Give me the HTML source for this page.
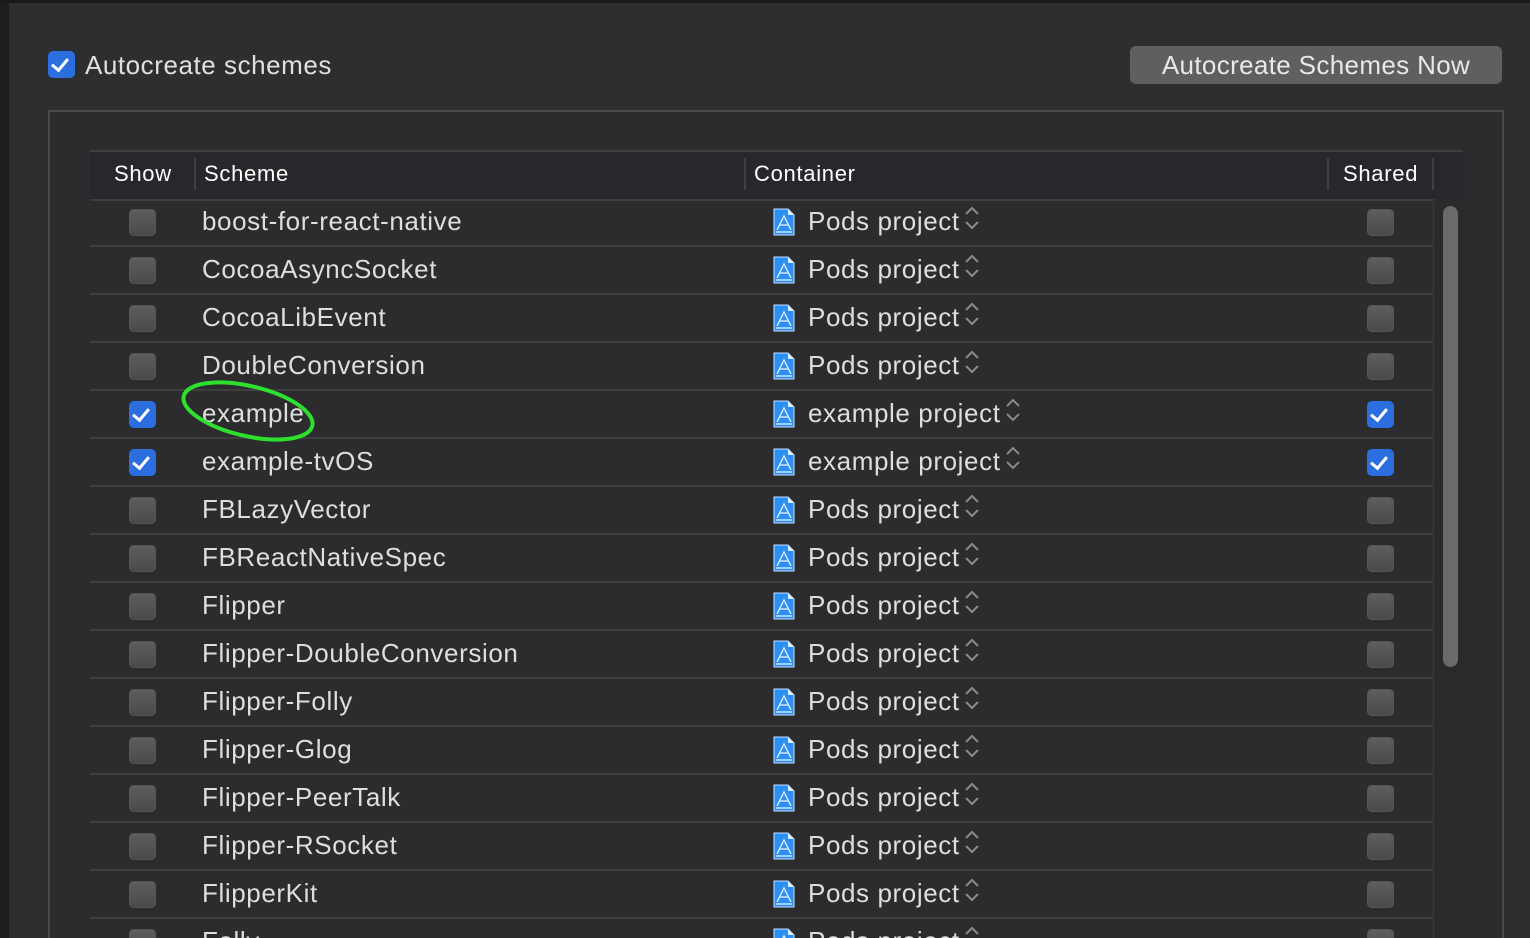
<!DOCTYPE html>
<html style="overflow:hidden"><head><meta charset="utf-8"><style>
html,body{margin:0;width:1530px;height:938px;overflow:hidden}
body{background:#2e2e30;font-family:"Liberation Sans",sans-serif;position:relative;color:#dcdcdc}
.a{position:absolute}
.cb{position:absolute;width:27px;height:27px;border-radius:5px;background:linear-gradient(#5e5e60,#4a4a4c);box-shadow:inset 0 0 0 1px #555}
.on{background:#2a6ee0;box-shadow:none}
.on::after{content:"";position:absolute;left:7px;top:4px;width:7px;height:13px;border:solid #fff;border-width:0 3px 3px 0;transform:rotate(40deg)}
.row{position:absolute;left:90px;width:1343px;height:46px;border-bottom:2px solid #3e3e41}
.row .n{position:absolute;left:112px;top:7px;font-size:26px;color:#dedede;letter-spacing:0.6px}
.row .c{position:absolute;left:718px;top:6px;font-size:26px;color:#dedede;letter-spacing:0.6px;white-space:nowrap}
.row .c svg{vertical-align:-1px;margin-left:4px}
.row .i{position:absolute;left:683px;top:9px;width:22px;height:28px}
.row .cb{top:10px}
.h{position:absolute;top:161px;font-size:22px;color:#fff;letter-spacing:0.7px}
.d{position:absolute;top:158px;width:2px;height:32px;background:#3e4044}
#clip{position:absolute;left:0;top:0;width:1530px;height:938px;overflow:hidden}
</style></head><body><div id="clip">
<div class="a" style="left:0;top:0;width:9px;height:938px;background:#1e1e20"></div>
<div class="a" style="left:0;top:0;width:1530px;height:3px;background:#1a1a1a"></div>
<div class="cb on" style="left:48px;top:51px"></div>
<div class="a" style="left:85px;top:50px;font-size:26px;color:#e0e0e0;letter-spacing:0.55px">Autocreate schemes</div>
<div class="a" style="left:1130px;top:46px;width:372px;height:38px;border-radius:6px;background:#5f5f61;color:#e8e8e8;font-size:26px;text-align:center;line-height:38px;letter-spacing:0.35px">Autocreate Schemes Now</div>
<div class="a" style="left:48px;top:110px;width:1452px;height:840px;border:2px solid #4a4a4c;background:#2c2c2e"></div>
<div class="a" style="left:90px;top:150px;width:1373px;height:47px;background:#26282b;border-top:2px solid #3e3e41;border-bottom:2px solid #3e3e41"></div>
<div class="h" style="left:114px">Show</div><div class="d" style="left:194px"></div>
<div class="h" style="left:204px">Scheme</div><div class="d" style="left:744px"></div>
<div class="h" style="left:754px">Container</div><div class="d" style="left:1327px"></div>
<div class="h" style="left:1343px">Shared</div><div class="d" style="left:1432px"></div>
<div class="a" style="left:1433px;top:199px;width:30px;height:739px;background:#2a2a2c;border-left:1px solid #3a3a3c"></div>
<div class="a" style="left:1443px;top:206px;width:15px;height:461px;border-radius:8px;background:#6a6a6c"></div>
<svg width="0" height="0" style="position:absolute"><defs><symbol id="ic" viewBox="0 0 22 28"><path d="M1 1h14l6 6v20H1z" fill="#2f8ff0" stroke="#bfe0ff" stroke-width="1"/><path d="M15 1v6h6" fill="#d8ecff"/><path d="M4 22L11 8l7 14M6 17h10M3 24h16" stroke="#e6f3ff" stroke-width="1.3" fill="none"/></symbol>
<symbol id="st" viewBox="0 0 16 26"><path d="M2 9l6-6 6 6M2 17l6 6 6-6" stroke="#8a8a8c" stroke-width="2" fill="none"/></symbol></defs></svg>
<div class="row" style="top:199px"><div class="cb" style="left:39px"></div><div class="n">boost-for-react-native</div><svg class="i"><use href="#ic"/></svg><div class="c">Pods project<svg width="16" height="26"><use href="#st"/></svg></div><div class="cb" style="left:1277px"></div></div>
<div class="row" style="top:247px"><div class="cb" style="left:39px"></div><div class="n">CocoaAsyncSocket</div><svg class="i"><use href="#ic"/></svg><div class="c">Pods project<svg width="16" height="26"><use href="#st"/></svg></div><div class="cb" style="left:1277px"></div></div>
<div class="row" style="top:295px"><div class="cb" style="left:39px"></div><div class="n">CocoaLibEvent</div><svg class="i"><use href="#ic"/></svg><div class="c">Pods project<svg width="16" height="26"><use href="#st"/></svg></div><div class="cb" style="left:1277px"></div></div>
<div class="row" style="top:343px"><div class="cb" style="left:39px"></div><div class="n">DoubleConversion</div><svg class="i"><use href="#ic"/></svg><div class="c">Pods project<svg width="16" height="26"><use href="#st"/></svg></div><div class="cb" style="left:1277px"></div></div>
<div class="row" style="top:391px"><div class="cb on" style="left:39px"></div><div class="n">example</div><svg class="i"><use href="#ic"/></svg><div class="c">example project<svg width="16" height="26"><use href="#st"/></svg></div><div class="cb on" style="left:1277px"></div></div>
<div class="row" style="top:439px"><div class="cb on" style="left:39px"></div><div class="n">example-tvOS</div><svg class="i"><use href="#ic"/></svg><div class="c">example project<svg width="16" height="26"><use href="#st"/></svg></div><div class="cb on" style="left:1277px"></div></div>
<div class="row" style="top:487px"><div class="cb" style="left:39px"></div><div class="n">FBLazyVector</div><svg class="i"><use href="#ic"/></svg><div class="c">Pods project<svg width="16" height="26"><use href="#st"/></svg></div><div class="cb" style="left:1277px"></div></div>
<div class="row" style="top:535px"><div class="cb" style="left:39px"></div><div class="n">FBReactNativeSpec</div><svg class="i"><use href="#ic"/></svg><div class="c">Pods project<svg width="16" height="26"><use href="#st"/></svg></div><div class="cb" style="left:1277px"></div></div>
<div class="row" style="top:583px"><div class="cb" style="left:39px"></div><div class="n">Flipper</div><svg class="i"><use href="#ic"/></svg><div class="c">Pods project<svg width="16" height="26"><use href="#st"/></svg></div><div class="cb" style="left:1277px"></div></div>
<div class="row" style="top:631px"><div class="cb" style="left:39px"></div><div class="n">Flipper-DoubleConversion</div><svg class="i"><use href="#ic"/></svg><div class="c">Pods project<svg width="16" height="26"><use href="#st"/></svg></div><div class="cb" style="left:1277px"></div></div>
<div class="row" style="top:679px"><div class="cb" style="left:39px"></div><div class="n">Flipper-Folly</div><svg class="i"><use href="#ic"/></svg><div class="c">Pods project<svg width="16" height="26"><use href="#st"/></svg></div><div class="cb" style="left:1277px"></div></div>
<div class="row" style="top:727px"><div class="cb" style="left:39px"></div><div class="n">Flipper-Glog</div><svg class="i"><use href="#ic"/></svg><div class="c">Pods project<svg width="16" height="26"><use href="#st"/></svg></div><div class="cb" style="left:1277px"></div></div>
<div class="row" style="top:775px"><div class="cb" style="left:39px"></div><div class="n">Flipper-PeerTalk</div><svg class="i"><use href="#ic"/></svg><div class="c">Pods project<svg width="16" height="26"><use href="#st"/></svg></div><div class="cb" style="left:1277px"></div></div>
<div class="row" style="top:823px"><div class="cb" style="left:39px"></div><div class="n">Flipper-RSocket</div><svg class="i"><use href="#ic"/></svg><div class="c">Pods project<svg width="16" height="26"><use href="#st"/></svg></div><div class="cb" style="left:1277px"></div></div>
<div class="row" style="top:871px"><div class="cb" style="left:39px"></div><div class="n">FlipperKit</div><svg class="i"><use href="#ic"/></svg><div class="c">Pods project<svg width="16" height="26"><use href="#st"/></svg></div><div class="cb" style="left:1277px"></div></div>
<div class="row" style="top:919px"><div class="cb" style="left:39px"></div><div class="n">Folly</div><svg class="i"><use href="#ic"/></svg><div class="c">Pods project<svg width="16" height="26"><use href="#st"/></svg></div><div class="cb" style="left:1277px"></div></div>
<svg class="a" style="left:0;top:0" width="1530" height="938"><ellipse cx="248" cy="411" rx="66" ry="25" transform="rotate(13 248 411)" fill="none" stroke="#2ee02e" stroke-width="4"/></svg>
</div></body></html>
